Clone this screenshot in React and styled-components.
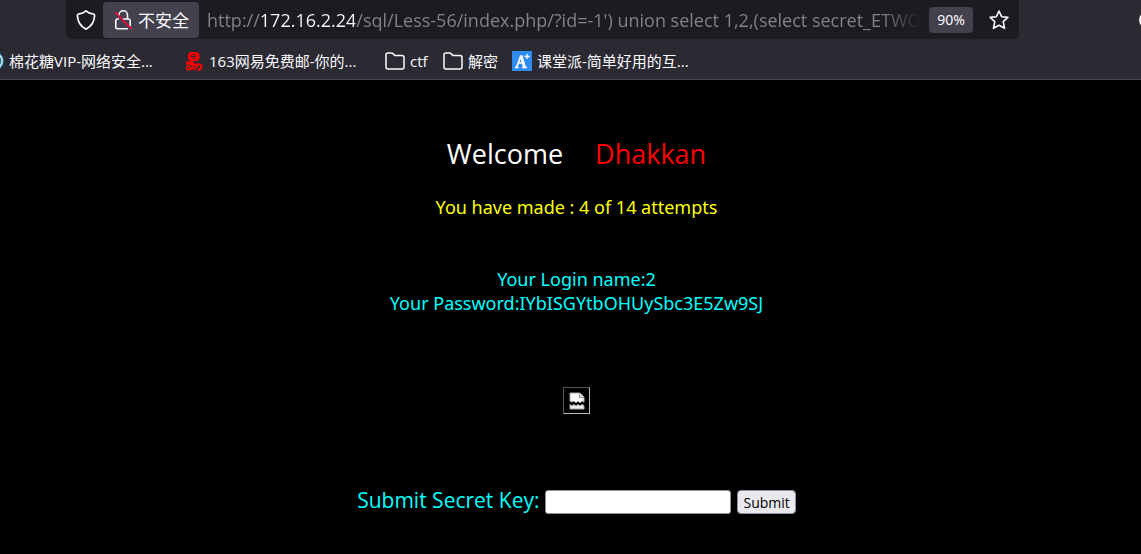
import React, { useState } from "react";
import styled, { createGlobalStyle } from "styled-components";

const GlobalStyle = createGlobalStyle`
  * {
    box-sizing: border-box;
  }
  body {
    margin: 0;
    background: #000;
    font-family: "Open Sans", "Noto Sans CJK SC", sans-serif;
  }
  svg {
    flex: none;
  }
`;

const Window = styled.div`
  min-height: 100vh;
  overflow: hidden;
`;

const Chrome = styled.header`
  background: #2b2a33;
  border-bottom: 1px solid #47464e;
  color: #fbfbfe;
`;

const NavBar = styled.div`
  display: flex;
  justify-content: space-between;
  height: 39px;
  padding-left: 66px;
`;

const UrlBar = styled.div`
  flex: 1;
  display: flex;
  align-items: center;
  min-width: 0;
  margin-right: 120px;
  padding: 0 9px 0 8px;
  background: #1c1b22;
  border-radius: 0 0 5px 5px;
`;

const IconButton = styled.button`
  display: flex;
  padding: 0;
  border: none;
  background: none;
  color: inherit;
`;

const Security = styled.button`
  display: flex;
  align-items: center;
  gap: 5px;
  height: 36px;
  margin: 0 8px 0 5px;
  padding: 0 10px;
  border: none;
  border-radius: 4px;
  background: #42414d;
  color: inherit;
  font: 17px "Noto Sans CJK SC", sans-serif;
  white-space: nowrap;
`;

/* the host is brighter than the rest, the end fades out */
const UrlInput = styled.input`
  flex: 1;
  min-width: 0;
  height: 32px;
  padding: 0;
  border: none;
  outline: none;
  background: linear-gradient(
    90deg,
    #85848a 53px,
    #fbfbfe 53px,
    #fbfbfe 148px,
    #85848a 148px,
    #85848a calc(100% - 40px),
    transparent
  );
  background-clip: text;
  -webkit-background-clip: text;
  color: transparent;
  font: 18px "Open Sans", sans-serif;
`;

const Zoom = styled.button`
  height: 26px;
  margin: 0 15px 0 8px;
  padding: 0 8px;
  border: none;
  border-radius: 4px;
  background: #42414d;
  color: inherit;
  font: 14px "Noto Sans", sans-serif;
`;

const MenuButton = styled(IconButton)`
  flex: none;
  align-items: center;
  width: 2px;
  overflow: hidden;
`;

const Bookmarks = styled.nav`
  display: flex;
  align-items: center;
  height: 40px;
  padding-top: 4px;
  overflow: hidden;
`;

const Bookmark = styled.a`
  display: flex;
  flex: none;
  align-items: center;
  gap: ${(props) => props.$gap || 5}px;
  width: ${(props) => props.$width}px;
  color: inherit;
  font-size: 15px;
  line-height: 24px;
  text-decoration: none;
  white-space: nowrap;
`;

const Page = styled.main`
  display: flex;
  flex-direction: column;
  align-items: center;
  padding: 56px 0 40px 12px;
  color: #0ff;
`;

const Title = styled.h1`
  display: flex;
  gap: 32px;
  margin: 0;
  color: #fff;
  font-size: 27px;
  font-weight: 400;
  line-height: 36px;
`;

const Name = styled.span`
  color: #f00;
`;

const Text = styled.p`
  margin: 0;
  font-family: "Noto Sans", sans-serif;
  font-size: 18px;
  line-height: 24px;
  text-align: center;
`;

const Attempts = styled(Text)`
  margin: 23px 0 48px;
  color: #ff0;
`;

const MissingImage = styled.div`
  display: flex;
  align-items: center;
  justify-content: center;
  width: 27px;
  height: 27px;
  margin: 72px 0;
  border: 1px solid;
  border-color: #555 #bbb #bbb #555;
`;

const Form = styled.form`
  display: flex;
  align-items: center;
  gap: 6px;
`;

const Label = styled.label`
  font-size: 21px;
  line-height: 28px;
`;

const KeyInput = styled.input`
  width: 186px;
  height: 24px;
  margin-top: 4px;
  border: 1px solid #8f8f9d;
  border-radius: 3px;
  background: #fff;
`;

const SubmitButton = styled.button`
  height: 24px;
  margin-top: 4px;
  padding: 0 5px;
  border: 1px solid #8f8f9d;
  border-radius: 4px;
  background: #e9e9ed;
  color: #000;
  font: 14px "Open Sans", sans-serif;
`;

function ShieldIcon() {
  return (
    <svg width="24" height="24" viewBox="0 0 24 24" fill="none" stroke="currentColor" strokeWidth="1.7" strokeLinejoin="round">
      <path d="M12 2.8C14 4.800 17 5.700 19.500 6 20.300 6.100 20.600 6.800 20.600 7.600 20.300 14.200 17.400 18.400 12 21.200 6.600 18.400 3.700 14.200 3.400 7.600 3.400 6.800 3.700 6.100 4.500 6 7 5.700 10 4.800 12 2.800Z" />
    </svg>
  );
}

function InsecureIcon() {
  return (
    <svg width="20" height="22" viewBox="0 0 20 22" fill="none" stroke="currentColor" strokeWidth="1.6">
      <path d="M6 6.500V6a4 4 0 0 1 8.500 0v4M6 10H4.500A1.700 1.700 0 0 0 2.800 11.700V18A1.700 1.700 0 0 0 4.500 19.700H15M10 10h5.500A1.700 1.700 0 0 1 17.200 11.700V17" />
      <path d="m2 3 16.500 17" stroke="#ff0039" strokeWidth="1.7" />
    </svg>
  );
}

function StarIcon() {
  return (
    <svg width="22" height="22" viewBox="0 0 22 22" fill="none" stroke="currentColor" strokeWidth="1.6" strokeLinejoin="round">
      <path d="m11 2 2.6 5.7 6.3.7-4.700 4.200 1.400 6.700L11 16.200l-5.600 3.100 1.400-6.700L2.100 8.400l6.300-.7Z" />
    </svg>
  );
}

function MenuIcon() {
  return (
    <svg width="18" height="18" viewBox="0 0 18 18" fill="none" stroke="currentColor" strokeWidth="1.8">
      <circle cx="9" cy="9" r="8" />
    </svg>
  );
}

function FolderIcon() {
  return (
    <svg width="20" height="18" viewBox="0 0 20 18" fill="none" stroke="currentColor" strokeWidth="1.5" strokeLinejoin="round">
      <path d="M1 3a2 2 0 0 1 2-2h3.600c.6 0 1 .2 1.400.6L9.800 3.400H17a2 2 0 0 1 2 2V15a2 2 0 0 1-2 2H3a2 2 0 0 1-2-2Z" />
    </svg>
  );
}

function WordPressIcon() {
  return (
    <svg width="4" height="20" viewBox="16 0 4 20">
      <circle cx="10" cy="10" r="10" fill="#21759b" />
      <circle cx="10" cy="10" r="8.800" fill="#fff" />
      <circle cx="10" cy="10" r="7.500" fill="#21759b" />
    </svg>
  );
}

function NeteaseIcon() {
  return (
    <svg width="18" height="20" viewBox="0 0 18 20" fill="none">
      <rect x="3" y="1" width="11.500" height="9" rx="4" fill="#f00" />
      <path d="M6.500 5.500h4.500c0-3-4.500-3-4.500 0 0 2.500 3 2.500 4.500 1.500" stroke="#2b2a33" strokeWidth="1" />
      <path
        d="M1 11.500h8M6 10 2 14M5 13.500h7q4-1 4.500 2-.5 3.500-4 3.500M9.500 13q-1.500 4-4 5.500M13 13q-1.500 4-4.500 6"
        stroke="#f00"
        strokeWidth="2"
      />
      <circle cx="3.500" cy="17" r="1.800" stroke="#f00" strokeWidth="1.500" />
    </svg>
  );
}

function KetangpaiIcon() {
  return (
    <svg width="20" height="20" viewBox="0 0 20 20" fill="none" stroke="#fff">
      <path d="M0 0h20v20H0Z" fill="#2d8cf0" stroke="none" />
      <path d="M4.500 16.500 9 4.500" strokeWidth="1.800" />
      <path d="M9 4.500 12.500 16.500" strokeWidth="2.800" />
      <path d="M3 16.500h3.500M10 16.500h5M6 12h5" strokeWidth="1.600" />
      <path d="M15 3v5M12.500 5.500h5" strokeWidth="1.300" />
    </svg>
  );
}

function BrokenImageIcon() {
  return (
    <svg width="16" height="18" viewBox="0 0 16 18">
      <path d="M1 1h10l4 4v5l-2-1-2 2-2-2-2 2-2-2-2 1-2-1Z" fill="#fff" stroke="#aaa" strokeWidth="1" />
      <path d="M10.500 1v4.500H15" fill="#ddd" stroke="#999" />
      <path d="M1 12.500 3 14l2-1.500L7 14l2-1.500 2 1.500 2-1.500 2 1V17H1Z" fill="#eee" stroke="#aaa" strokeWidth="1" />
    </svg>
  );
}

export default function App() {
  const [url, setUrl] = useState(
    "http://172.16.2.24/sql/Less-56/index.php/?id=-1') union select 1,2,(select secret_ETWO"
  );
  const [key, setKey] = useState("");

  return (
    <Window>
      <GlobalStyle />
      <Chrome>
        <NavBar>
          <UrlBar>
            <IconButton type="button" aria-label="Protections">
              <ShieldIcon />
            </IconButton>
            <Security type="button">
              <InsecureIcon />
              不安全
            </Security>
            <UrlInput
              aria-label="Address"
              spellCheck={false}
              value={url}
              onChange={(e) => setUrl(e.target.value)}
            />
            <Zoom type="button">90%</Zoom>
            <IconButton type="button" aria-label="Bookmark">
              <StarIcon />
            </IconButton>
          </UrlBar>
          <MenuButton type="button" aria-label="Account">
            <MenuIcon />
          </MenuButton>
        </NavBar>
        <Bookmarks>
          <Bookmark href="#" $width={185}>
            <WordPressIcon />
            棉花糖VIP-网络安全...
          </Bookmark>
          <Bookmark href="#" $width={200} $gap={6}>
            <NeteaseIcon />
            163网易免费邮-你的...
          </Bookmark>
          <Bookmark href="#" $width={58}>
            <FolderIcon />
            ctf
          </Bookmark>
          <Bookmark href="#" $width={69}>
            <FolderIcon />
            解密
          </Bookmark>
          <Bookmark href="#" $width={185}>
            <KetangpaiIcon />
            课堂派-简单好用的互...
          </Bookmark>
        </Bookmarks>
      </Chrome>
      <Page>
        <Title>
          Welcome <Name>Dhakkan</Name>
        </Title>
        <Attempts>You have made : 4 of 14 attempts</Attempts>
        <Text>
          Your Login name:2
          <br />
          Your Password:IYbISGYtbOHUySbc3E5Zw9SJ
        </Text>
        <MissingImage role="img" aria-label="Missing">
          <BrokenImageIcon />
        </MissingImage>
        <Form onSubmit={(e) => e.preventDefault()}>
          <Label htmlFor="key">Submit Secret Key:</Label>
          <KeyInput id="key" value={key} onChange={(e) => setKey(e.target.value)} />
          <SubmitButton type="submit">Submit</SubmitButton>
        </Form>
      </Page>
    </Window>
  );
}
